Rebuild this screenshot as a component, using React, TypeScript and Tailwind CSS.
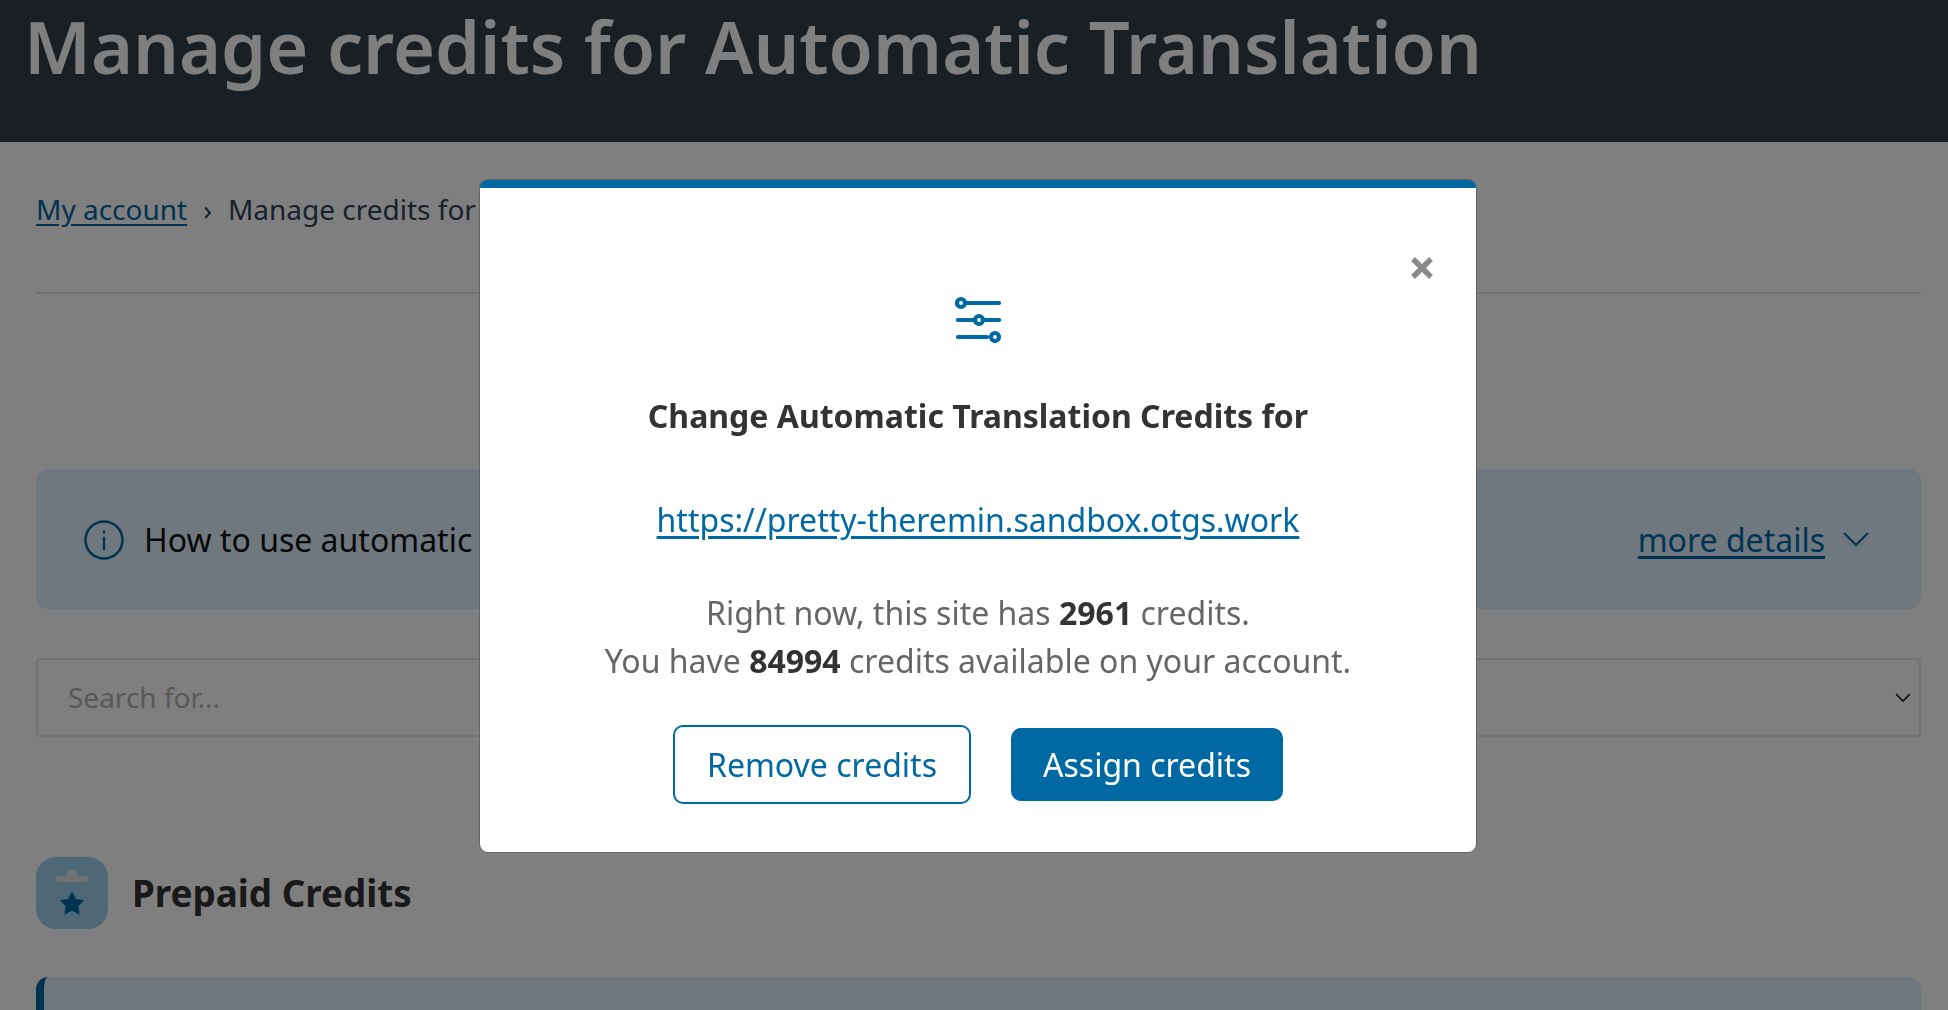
const font = { fontFamily: '"Noto Sans", sans-serif' }

function SlidersIcon() {
  return (
    <svg className="ml-[2px]" width="48" height="48" viewBox="0 0 48 48" fill="none" stroke="#0069a3" strokeWidth="4.2" strokeLinecap="round">
      <path d="M10 7h34M3 24h16M29 24h15M3 41h29" />
      <circle cx="6" cy="7" r="4" />
      <circle cx="24" cy="24" r="4" />
      <circle cx="40" cy="41" r="4" />
    </svg>
  )
}

function InfoIcon() {
  return (
    <svg width="42" height="42" viewBox="0 0 42 42" fill="none" stroke="#0069a3" strokeWidth="2.5" strokeLinecap="round">
      <circle cx="21" cy="21" r="18.5" />
      <path d="M21 19v11M21 12.5v1" />
    </svg>
  )
}

function ClipIcon() {
  return (
    <div className="flex h-[72px] w-[72px] items-center justify-center rounded-[20px] bg-[#9fd0eb]">
      <svg width="40" height="56" viewBox="0 0 40 56" fill="none">
        <path d="M4 14a3 3 0 0 1 3-3h7c1-4 3-6 6-6s5 2 6 6h7a3 3 0 0 1 0 6H7a3 3 0 0 1-3-3z" fill="#e4e4e4" />
        <path d="M20 26l3.9 7.9 8.6 1.2-6.2 6.1 1.5 8.6-7.8-4.1-7.8 4.1 1.5-8.6-6.2-6.1 8.6-1.2z" fill="#0069a3" />
      </svg>
    </div>
  )
}

function Modal() {
  return (
    <div className="relative flex h-[672px] w-[996px] flex-col items-center rounded-[8px] border-t-[8px] border-[#0069a3] bg-white pt-[108px] shadow-[0_0_0_1px_rgba(0,0,0,0.2)]">
      <button className="absolute right-[41px] top-[67px]">
        <svg width="26" height="26" viewBox="0 0 26 26" stroke="#8a8a8a" strokeWidth="5.5">
          <path d="M4 4l18 18M22 4L4 22" />
        </svg>
      </button>
      <SlidersIcon />
      <h2 className="mt-[48px] text-[32px] font-bold leading-[48px] text-[#333333]">Change Automatic Translation Credits for</h2>
      <a className="mt-[56px] text-[32px] leading-[48px] text-[#0069a3] underline underline-offset-4">https://pretty-theremin.sandbox.otgs.work</a>
      <p className="mt-[45px] text-center text-[32px] leading-[48px] text-[#666666]">
        Right now, this site has <b className="font-bold text-[#333333]">2961</b> credits.
        <br />
        You have <b className="font-bold text-[#333333]">84994</b> credits available on your account.
      </p>
      <div className="mt-[40px] flex items-center gap-[40px]">
        <button className="h-[79px] w-[298px] rounded-[10px] border-2 border-[#0069a3] text-[32px] text-[#0069a3]">Remove credits</button>
        <button className="h-[73px] w-[272px] rounded-[10px] bg-[#0069a3] text-[32px] text-white">Assign credits</button>
      </div>
    </div>
  )
}

export default function App() {
  return (
    <div className="h-[1010px] overflow-hidden bg-white" style={font}>
      <header className="h-[142px] bg-[#333e46] pl-[24px]">
        <h1 className="text-[72px] font-semibold leading-[92px] text-white">Manage credits for Automatic Translation</h1>
      </header>

      <main className="pl-[36px] pr-[27px] text-[#33425a]">
        <nav className="flex h-[152px] items-start gap-[16px] border-b-2 border-[#e8e8f0] pt-[47px] text-[28px] leading-[40px]">
          <a className="text-[#0069a3] underline underline-offset-4">My account</a>
          <span>›</span>
          <span>Manage credits for Automatic Translation</span>
        </nav>

        <section className="mt-[175px] flex h-[140px] items-center rounded-[12px] bg-[#dff0ff] pl-[47px] pr-[50px] pt-[2px] text-[32px] text-[#111111]">
          <InfoIcon />
          <span className="ml-[19px]">How to use automatic translation credits</span>
          <a className="ml-auto text-[#0069a3] underline underline-offset-4">more details</a>
          <svg className="ml-[16px]" width="30" height="18" viewBox="0 0 30 18" fill="none" stroke="#0069a3" strokeWidth="2">
            <path d="M3 2l12 12L27 2" />
          </svg>
        </section>

        <div className="mt-[49px] flex h-[79px] items-center rounded-[4px] border-2 border-[#e6e6e6] pl-[30px] pr-[6px] text-[28px] text-[#b3b3b3]">
          <span className="mb-[2px]">Search for...</span>
          <svg className="ml-auto" width="20" height="12" viewBox="0 0 20 12" fill="none" stroke="#222222" strokeWidth="1.7">
            <path d="M3 2l7 7 7-7" />
          </svg>
        </div>

        <div className="mt-[120px] flex items-center gap-[24px]">
          <ClipIcon />
          <h3 className="mt-[2px] text-[36.8px] font-bold text-[#333333]">Prepaid Credits</h3>
        </div>

        <div className="mt-[48px] h-[80px] rounded-[12px] border-l-[8px] border-[#0069a3] bg-[#dff0ff]" />
      </main>

      <div className="fixed inset-0 bg-black/50 pl-[480px] pt-[180px]">
        <Modal />
      </div>
    </div>
  )
}
